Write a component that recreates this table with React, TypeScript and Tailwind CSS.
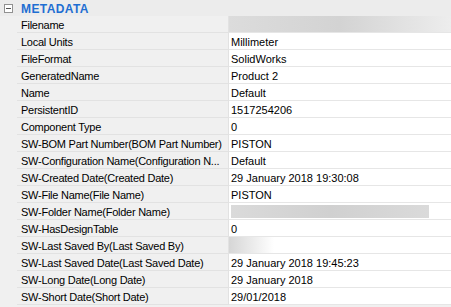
const rows: { label: string; value?: string; blur?: "full" | "bar" | "short" }[] = [
  { label: "Filename", blur: "full" },
  { label: "Local Units", value: "Millimeter" },
  { label: "FileFormat", value: "SolidWorks" },
  { label: "GeneratedName", value: "Product 2" },
  { label: "Name", value: "Default" },
  { label: "PersistentID", value: "1517254206" },
  { label: "Component Type", value: "0" },
  { label: "SW-BOM Part Number(BOM Part Number)", value: "PISTON" },
  { label: "SW-Configuration Name(Configuration N...", value: "Default" },
  { label: "SW-Created Date(Created Date)", value: "29 January 2018 19:30:08" },
  { label: "SW-File Name(File Name)", value: "PISTON" },
  { label: "SW-Folder Name(Folder Name)", blur: "bar" },
  { label: "SW-HasDesignTable", value: "0" },
  { label: "SW-Last Saved By(Last Saved By)", blur: "short" },
  { label: "SW-Last Saved Date(Last Saved Date)", value: "29 January 2018 19:45:23" },
  { label: "SW-Long Date(Long Date)", value: "29 January 2018" },
  { label: "SW-Short Date(Short Date)", value: "29/01/2018" },
];

export default function App() {
  return (
    <div
      className="w-[451px] h-[307px] overflow-hidden bg-[#f0f0f0] text-[11px] text-black"
      style={{ fontFamily: '"Liberation Sans", Arial, sans-serif' }}
    >
      {/* category header */}
      <div className="h-[16px] flex items-center bg-[#ececec]">
        <div className="ml-[4px] mt-[1px] w-[9px] h-[9px] border border-[#919191] bg-white flex items-center justify-center">
          <div className="w-[5px] h-px bg-[#555]" />
        </div>
        <span className="ml-[8px] mt-[1px] font-bold text-[12px] text-[#1e6ed2] tracking-[0.4px]">METADATA</span>
      </div>

      {rows.map((r) => (
        <div key={r.label} className="flex h-[17px]">
          <div className="w-[17px] shrink-0" />
          <div className="w-[212px] shrink-0 border-b border-r border-[#e2e2e2] pl-[4px] pt-[3px] leading-[13px] tracking-[-0.25px] whitespace-nowrap overflow-hidden">
            {r.label}
          </div>
          <div className="flex-1 bg-white border-b border-[#e6e6e6] pl-[2px] pt-[3px] leading-[13px] whitespace-nowrap overflow-hidden">
            {r.value}
            {r.blur === "full" && (
              <div className="-ml-[2px] -mt-[3px] h-[16px] bg-gradient-to-r from-[#dcdcdc] via-[#d3d3d3] to-[#ededed]" />
            )}
            {r.blur === "bar" && (
              <div className="-mt-[1px] h-[13px] w-[198px] bg-gradient-to-r from-[#dadada] via-[#d0d0d0] to-[#dadada]" />
            )}
            {r.blur === "short" && (
              <div className="-ml-[2px] -mt-[3px] h-[16px] w-[45px] bg-gradient-to-r from-[#d6d6d6] to-white" />
            )}
          </div>
        </div>
      ))}
    </div>
  );
}
